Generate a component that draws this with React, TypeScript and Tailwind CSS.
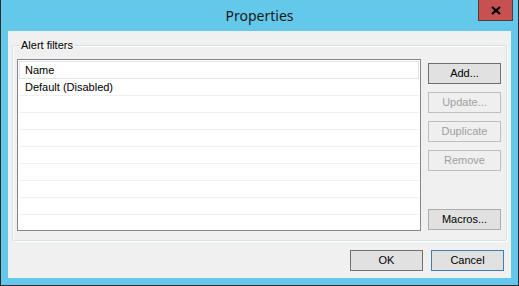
import React from "react";

const rows = ["Default (Disabled)", "", "", "", "", "", "", "", ""];

function Btn({
  label,
  disabled,
  variant,
}: {
  label: string;
  disabled?: boolean;
  variant?: "default" | "focus";
}) {
  const border = disabled
    ? "border-[#bfbfbf] bg-[#efefef] text-[#a0a0a0]"
    : variant === "focus"
    ? "border-[#3c7fb1] bg-[#e1e1e1] text-black"
    : variant === "default"
    ? "border-[#707070] bg-[#e1e1e1] text-black"
    : "border-[#adadad] bg-[#e1e1e1] text-black";
  return (
    <button
      className={`w-[73px] h-[21px] border flex items-center justify-center text-[11px] leading-none ${border}`}
    >
      {label}
    </button>
  );
}

export default function App() {
  return (
    <div
      className="w-[519px] h-[286px] bg-[#63c8e9] border-x border-b border-[#2b2b2b] flex flex-col"
      style={{ fontFamily: '"Liberation Sans", Arial, sans-serif' }}
    >
      {/* Title bar */}
      <div className="relative h-[31px] shrink-0 flex items-center justify-center">
        <span
          className="text-[14px] text-[#1a1a1a] -mt-[1px]"
          style={{ fontFamily: '"Noto Sans", "Open Sans", sans-serif' }}
        >
          Properties
        </span>
        <div className="absolute right-[5px] top-0 w-[35px] h-[21px] bg-[#c75050] border-x border-b border-[#5a3838] flex items-center justify-center">
          <svg width="10" height="9" viewBox="0 0 10 9">
            <path d="M1 1 L9 8 M9 1 L1 8" stroke="#000" strokeWidth="2.2" />
          </svg>
        </div>
      </div>

      {/* Client area */}
      <div className="mx-[7px] h-[247px] bg-[#f0f0f0] flex flex-col">
        <fieldset className="mx-[4px] mt-[8px] h-[202px] border border-[#d5dfe5] rounded-[2px] shadow-[inset_1px_1px_0_#ffffff,1px_1px_0_#ffffff] px-[4px]">
          <legend className="ml-[3px] px-[1px] text-[11px] leading-[13px] text-black">
            Alert filters
          </legend>
          <div className="flex mt-[7px]">
            <div className="w-[404px] h-[172px] border border-[#828790] bg-white p-[1px] flex flex-col">
              <div className="h-[18px] border border-[#e3e3e3] flex items-center pl-[5px] text-[11px] text-black">
                Name
              </div>
              {rows.map((r, i) => (
                <div
                  key={i}
                  className="h-[17px] shrink-0 border-b border-[#f0f0f0] flex items-center pl-[6px] text-[11px] text-black"
                >
                  {r}
                </div>
              ))}
            </div>
            <div className="ml-[7px] h-[172px] pt-[4px] pb-[1px] flex flex-col justify-between">
              <div className="flex flex-col gap-[8px]">
                <Btn label="Add..." variant="default" />
                <Btn label="Update..." disabled />
                <Btn label="Duplicate" disabled />
                <Btn label="Remove" disabled />
              </div>
              <Btn label="Macros..." />
            </div>
          </div>
        </fieldset>
        <div className="flex justify-end gap-[8px] mt-[9px] mr-[7px]">
          <Btn label="OK" variant="default" />
          <Btn label="Cancel" variant="focus" />
        </div>
      </div>
    </div>
  );
}
